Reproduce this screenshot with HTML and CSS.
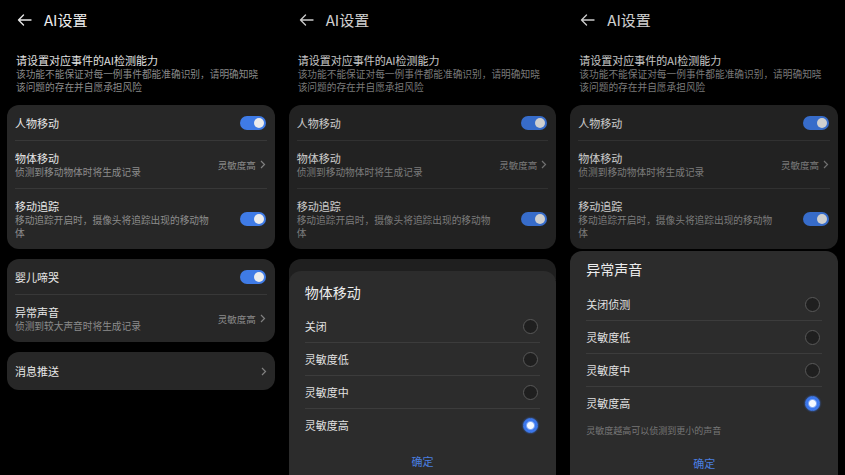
FILE: index.html
```html
<!DOCTYPE html>
<html lang="zh-CN">
<head>
    <meta charset="UTF-8">
    <meta name="viewport" content="width=device-width, initial-scale=1.0">
    <title>AI设置</title>
    <link rel="stylesheet" href="styles.css">
</head>
<body>
    <!-- Screen 1: settings list -->
    <div class="phone">
        <div class="header">
            <svg class="back" width="15" height="12" viewBox="0 0 15 12"><path d="M14 6H1.5M6.5 1L1.5 6l5 5" fill="none" stroke="#e6e6e6" stroke-width="1.4" stroke-linecap="round" stroke-linejoin="round"/></svg>
            <span class="title">AI设置</span>
        </div>
        <div class="intro">
            <div class="intro-title">请设置对应事件的AI检测能力</div>
            <div class="intro-sub">该功能不能保证对每一例事件都能准确识别，请明确知晓<br>该问题的存在并自愿承担风险</div>
        </div>
        <div class="card">
            <div class="row single">
                <span class="label">人物移动</span>
                <span class="toggle"></span>
            </div>
            <div class="row double">
                <div class="texts">
                    <div class="label">物体移动</div>
                    <div class="sub">侦测到移动物体时将生成记录</div>
                </div>
                <span class="value">灵敏度高<svg class="chev" width="6" height="9" viewBox="0 0 6 9"><path d="M1 1l3.5 3.5L1 8" fill="none" stroke="#808080" stroke-width="1.2"/></svg></span>
            </div>
            <div class="row double">
                <div class="texts">
                    <div class="label">移动追踪</div>
                    <div class="sub">移动追踪开启时，摄像头将追踪出现的移动物体</div>
                </div>
                <span class="toggle"></span>
            </div>
        </div>
        <div class="card">
            <div class="row single">
                <span class="label">婴儿啼哭</span>
                <span class="toggle"></span>
            </div>
            <div class="row double">
                <div class="texts">
                    <div class="label">异常声音</div>
                    <div class="sub">侦测到较大声音时将生成记录</div>
                </div>
                <span class="value">灵敏度高<svg class="chev" width="6" height="9" viewBox="0 0 6 9"><path d="M1 1l3.5 3.5L1 8" fill="none" stroke="#808080" stroke-width="1.2"/></svg></span>
            </div>
        </div>
        <div class="card">
            <div class="row push">
                <span class="label">消息推送</span>
                <svg class="chev" width="6" height="9" viewBox="0 0 6 9"><path d="M1 1l3.5 3.5L1 8" fill="none" stroke="#808080" stroke-width="1.2"/></svg>
            </div>
        </div>
    </div>

    <!-- Screen 2: 物体移动 sheet -->
    <div class="phone">
        <div class="behind">
            <div class="header">
                <svg class="back" width="15" height="12" viewBox="0 0 15 12"><path d="M14 6H1.5M6.5 1L1.5 6l5 5" fill="none" stroke="#e6e6e6" stroke-width="1.4" stroke-linecap="round" stroke-linejoin="round"/></svg>
                <span class="title">AI设置</span>
            </div>
            <div class="intro">
                <div class="intro-title">请设置对应事件的AI检测能力</div>
                <div class="intro-sub">该功能不能保证对每一例事件都能准确识别，请明确知晓<br>该问题的存在并自愿承担风险</div>
            </div>
            <div class="card">
                <div class="row single">
                    <span class="label">人物移动</span>
                    <span class="toggle"></span>
                </div>
                <div class="row double">
                    <div class="texts">
                        <div class="label">物体移动</div>
                        <div class="sub">侦测到移动物体时将生成记录</div>
                    </div>
                    <span class="value">灵敏度高<svg class="chev" width="6" height="9" viewBox="0 0 6 9"><path d="M1 1l3.5 3.5L1 8" fill="none" stroke="#808080" stroke-width="1.2"/></svg></span>
                </div>
                <div class="row double">
                    <div class="texts">
                        <div class="label">移动追踪</div>
                        <div class="sub">移动追踪开启时，摄像头将追踪出现的移动物体</div>
                    </div>
                    <span class="toggle"></span>
                </div>
            </div>
            <div class="peek"></div>
        </div>
        <div class="sheet sheet-a">
            <div class="sheet-title">物体移动</div>
            <div class="option"><span>关闭</span><span class="radio"></span></div>
            <div class="option"><span>灵敏度低</span><span class="radio"></span></div>
            <div class="option"><span>灵敏度中</span><span class="radio"></span></div>
            <div class="option"><span>灵敏度高</span><span class="radio on"></span></div>
            <div class="confirm">确定</div>
        </div>
    </div>

    <!-- Screen 3: 异常声音 sheet -->
    <div class="phone">
        <div class="behind">
            <div class="header">
                <svg class="back" width="15" height="12" viewBox="0 0 15 12"><path d="M14 6H1.5M6.5 1L1.5 6l5 5" fill="none" stroke="#e6e6e6" stroke-width="1.4" stroke-linecap="round" stroke-linejoin="round"/></svg>
                <span class="title">AI设置</span>
            </div>
            <div class="intro">
                <div class="intro-title">请设置对应事件的AI检测能力</div>
                <div class="intro-sub">该功能不能保证对每一例事件都能准确识别，请明确知晓<br>该问题的存在并自愿承担风险</div>
            </div>
            <div class="card">
                <div class="row single">
                    <span class="label">人物移动</span>
                    <span class="toggle"></span>
                </div>
                <div class="row double">
                    <div class="texts">
                        <div class="label">物体移动</div>
                        <div class="sub">侦测到移动物体时将生成记录</div>
                    </div>
                    <span class="value">灵敏度高<svg class="chev" width="6" height="9" viewBox="0 0 6 9"><path d="M1 1l3.5 3.5L1 8" fill="none" stroke="#808080" stroke-width="1.2"/></svg></span>
                </div>
                <div class="row double">
                    <div class="texts">
                        <div class="label">移动追踪</div>
                        <div class="sub">移动追踪开启时，摄像头将追踪出现的移动物体</div>
                    </div>
                    <span class="toggle"></span>
                </div>
            </div>
        </div>
        <div class="sheet sheet-b">
            <div class="sheet-title">异常声音</div>
            <div class="option"><span>关闭侦测</span><span class="radio"></span></div>
            <div class="option"><span>灵敏度低</span><span class="radio"></span></div>
            <div class="option"><span>灵敏度中</span><span class="radio"></span></div>
            <div class="option"><span>灵敏度高</span><span class="radio on"></span></div>
            <div class="hint">灵敏度越高可以侦测到更小的声音</div>
            <div class="confirm">确定</div>
        </div>
    </div>
</body>
</html>
```

FILE: styles.css
```css
body {
    margin: 0;
    width: 845px;
    height: 475px;
    overflow: hidden;
    display: flex;
    background-color: #000;
    color: #e6e6e6;
    font-family: "Noto Sans CJK SC", "Noto Sans", sans-serif;
}
.phone {
    flex: 1;
    min-width: 0;
    display: flex;
    flex-direction: column;
}
.behind {
    opacity: 0.88;
}
.header {
    height: 40px;
    display: flex;
    align-items: center;
    padding-left: 17px;
}
.back {
    margin-right: 12px;
}
.title {
    font-size: 15px;
    line-height: 20px;
    color: #ececec;
}
.intro {
    padding: 12px 10px 0 16px;
    margin-bottom: 11px;
}
.intro-title {
    font-size: 11px;
    line-height: 16px;
    color: #e0e0e0;
}
.intro-sub {
    font-size: 9.7px;
    line-height: 13px;
    color: #8a8a8a;
    white-space: nowrap;
}
.card {
    margin: 0 7px 10px;
    padding: 0 8px;
    background-color: #272727;
    border-radius: 12px;
}
.row {
    display: flex;
    align-items: center;
    justify-content: space-between;
    border-bottom: 1px solid #383838;
}
.row:last-child {
    border-bottom: none;
}
.single {
    height: 35px;
}
.double {
    padding: 9px 0;
}
.push {
    height: 38px;
}
.texts {
    flex: 1;
    min-width: 0;
    padding-right: 26px;
}
.label {
    font-size: 11px;
    line-height: 16px;
    color: #e8e8e8;
}
.sub {
    font-size: 9.7px;
    line-height: 13px;
    color: #8c8c8c;
}
.value {
    display: flex;
    align-items: center;
    gap: 4px;
    font-size: 9.5px;
    color: #8c8c8c;
    padding-right: 1px;
}
.toggle {
    flex-shrink: 0;
    position: relative;
    width: 26px;
    height: 14px;
    border-radius: 7px;
    background-color: #3f7be6;
    margin-right: 1px;
}
.toggle::after {
    content: "";
    position: absolute;
    top: 2px;
    right: 2px;
    width: 10px;
    height: 10px;
    border-radius: 50%;
    background-color: #ececec;
}
.peek {
    margin: 0 7px;
    height: 21px;
    border-radius: 12px 12px 0 0;
    background-color: #232323;
}
.sheet {
    flex: 1;
    margin: 0 7px;
    padding: 0 16px;
    background-color: #2c2c2c;
    border-radius: 12px 12px 0 0;
    position: relative;
}
.sheet-a {
    margin-top: -9px;
    padding-top: 11px;
}
.sheet-b {
    margin-top: -8px;
    padding-top: 8px;
}
.sheet-title {
    font-size: 14px;
    line-height: 20px;
    color: #ececec;
    margin-bottom: 8px;
}
.sheet-b .sheet-title {
    margin-bottom: 9px;
}
.option {
    height: 32px;
    display: flex;
    align-items: center;
    justify-content: space-between;
    font-size: 11px;
    color: #e2e2e2;
    border-bottom: 1px solid #3c3c3c;
}
.option:nth-of-type(5) {
    border-bottom: none;
}
.radio {
    width: 13px;
    height: 13px;
    margin-right: 2px;
    border-radius: 50%;
    border: 1px solid #585858;
    background-color: #1f1f1f;
}
.radio.on {
    border-color: #3f7cf0;
    background: radial-gradient(circle, #f4f8ff 0 3px, #7fa8f5 4px, #3b76ec 5px);
    box-shadow: 0 0 2px #3b76ec;
}
.hint {
    margin-top: 5px;
    font-size: 9px;
    line-height: 14px;
    color: #777;
}
.confirm {
    text-align: center;
    font-size: 11px;
    line-height: 20px;
    color: #4a7fe0;
    margin-top: 10px;
}
.sheet-b .confirm {
    margin-top: 15px;
}
```
